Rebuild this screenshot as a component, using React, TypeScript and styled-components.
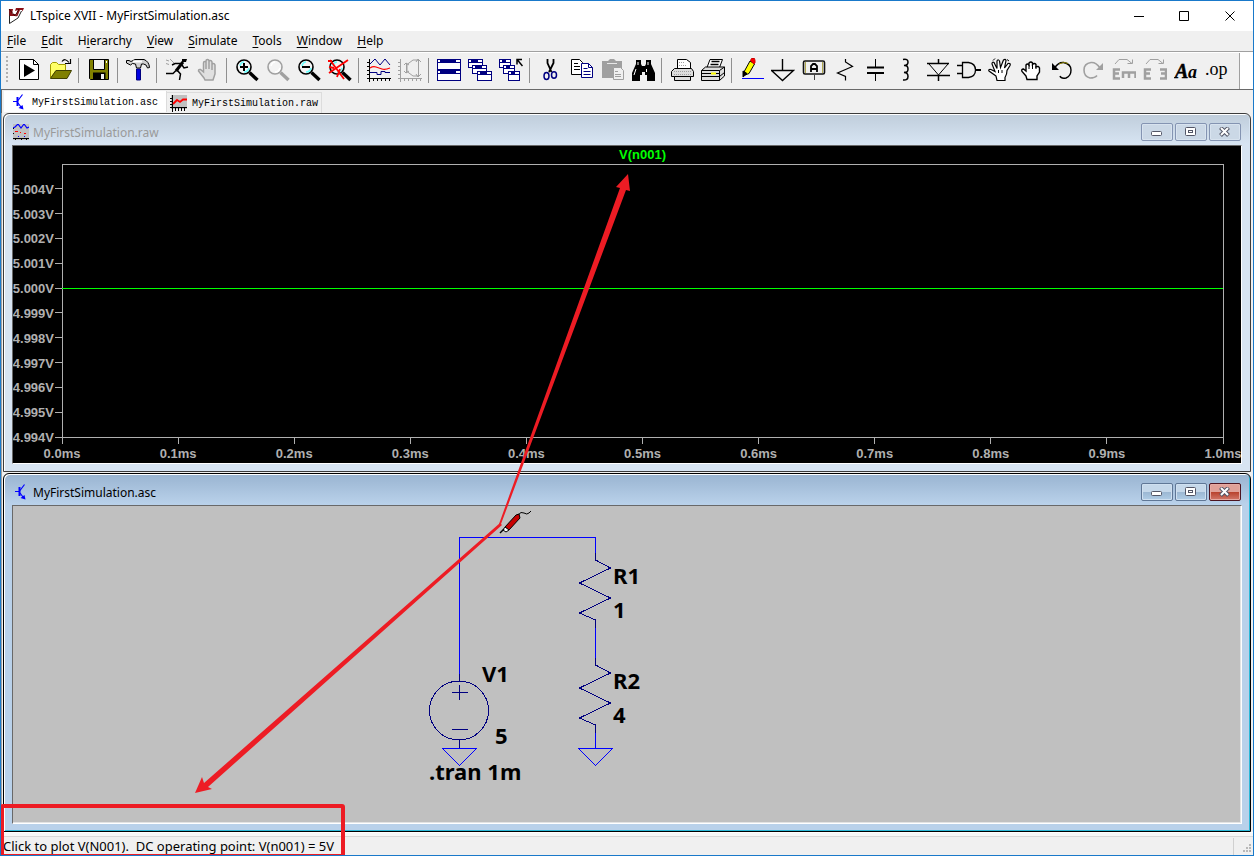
import React from "react";
import styled, { createGlobalStyle, css } from "styled-components";

const UI_FONT = '"Noto Sans", "Open Sans", sans-serif';
const PLOT_FONT = '"Liberation Sans", Arial, sans-serif';
const MONO_FONT = '"Liberation Mono", "DejaVu Sans Mono", monospace';

const GlobalStyle = createGlobalStyle`
  *, *::before, *::after { box-sizing: border-box; }
  body { margin: 0; font-family: ${UI_FONT}; font-size: 12px; color: #000; }
  button { font: inherit; color: inherit; margin: 0; padding: 0; border: 0; background: none; }
`;

const Frame = styled.div`
  position: relative;
  display: flex;
  flex-direction: column;
  min-height: 100vh;
  border: 1px solid #1979ca;
  background: #f0f0f0;
  overflow: hidden;
`;

/* ---------- title bar and menus ---------- */

const TitleBar = styled.header`
  display: flex;
  align-items: center;
  height: 30px;
  padding-left: 7px;
  background: #fff;
`;

const AppTitle = styled.h1`
  flex: 1;
  margin: 0;
  padding-left: 6px;
  font-size: 12px;
  font-weight: 400;
  line-height: 16px;
`;

const CaptionButton = styled.button`
  display: grid;
  place-items: center;
  width: 46px;
  height: 28px;
`;

const MenuBar = styled.nav`
  display: flex;
  gap: 15px;
  height: 20px;
  padding-left: 6px;
`;

const MenuItem = styled.button`
  line-height: 18px;
  u { text-underline-offset: 2px; }
`;

/* ---------- toolbar ---------- */

const ToolRow = styled.div`
  display: flex;
  height: 39px;
  border-top: 1px solid #a0a0a0;
  border-bottom: 1px solid #696969;
  background: #fff;
`;

const ToolBar = styled.div`
  display: flex;
  align-items: center;
  height: 36px;
  margin-top: 1px;
  padding: 0 7px 2px 5px;
  border-right: 1px solid #a0a0a0;
  background: #f0f0f0;
`;

const Grip = styled.div`
  width: 2px;
  height: 28px;
  margin-right: 5px;
  background: repeating-linear-gradient(#b0b0b0 0 2px, transparent 2px 4px);
`;

const ToolButton = styled.button`
  display: grid;
  place-items: center;
  width: 31px;
  height: 28px;
`;

const Divider = styled.div`
  width: 8px;
  height: 25px;
  background: linear-gradient(90deg, transparent 3px, #909090 3px 4px, transparent 4px);
`;

/* ---------- document tabs ---------- */

const TabStrip = styled.div`
  display: flex;
  align-items: flex-start;
  height: 23px;
  padding: 1px 2px 0;
  border-left: 1px solid #696969;
`;

const Tab = styled.button<{ $active?: boolean }>`
  display: flex;
  align-items: center;
  gap: 5px;
  height: 21px;
  font-family: ${MONO_FONT};
  font-size: 10px;
  line-height: 12px;
  border-right: 1px solid #dcdcdc;
  span { padding-top: 2px; }
  ${(p) =>
    p.$active
      ? css`
          padding: 0 8px 0 7px;
          background: #fff;
        `
      : css`
          margin-top: 1px;
          padding: 0 3px;
          border-top: 1px solid #dcdcdc;
        `}
`;

/* ---------- document windows ---------- */

const Workspace = styled.main`
  flex: 1;
  display: flex;
  flex-direction: column;
  padding: 0 2px 0 1px;
  border-left: 1px solid #a0a0a0;
  background: #efefef;
`;

const DocWindow = styled.section<{ $active?: boolean }>`
  flex: 1 0 359px;
  display: flex;
  flex-direction: column;
  padding: 0 8px 7px;
  border: 1px solid ${(p) => (p.$active ? "#000" : "#3c3c3c")};
  border-radius: 6px 6px 0 0;
  background: ${(p) =>
    p.$active
      ? "linear-gradient(#99b4d1, #b9d1ea 30px, #b9d1ea)"
      : "linear-gradient(#bfcddb, #d7e4f2 30px, #d7e4f2)"};
  box-shadow: inset 1px 1px #fff, inset -1px -1px ${(p) => (p.$active ? "#2cb9d8" : "#d7e4f2")};
  & + & { margin-top: 1px; }
`;

const DocTitle = styled.div<{ $active?: boolean }>`
  display: flex;
  align-items: center;
  gap: 2px;
  height: 31px;
  padding: 5px 1px 0;
  color: ${(p) => (p.$active ? "#000" : "#9a9a9a")};
  h2 {
    flex: 1;
    margin: 0;
    padding: 2px 0 0 2px;
    font-size: 12px;
    font-weight: 400;
    line-height: 16px;
  }
`;

const DocButton = styled.button<{ $tone: "idle" | "blue" | "red" }>`
  display: grid;
  place-items: center;
  width: 32px;
  height: 18px;
  border: 1px solid #8494b2;
  border-radius: 2px;
  ${(p) =>
    p.$tone === "idle" &&
    css`
      background: #cbd8e6;
      box-shadow: inset 0 0 0 1px #d8e3ef;
    `}
  ${(p) =>
    p.$tone === "blue" &&
    css`
      border-color: #5f7796;
      background: linear-gradient(#c5d8ea 50%, #9bb7d2 50%, #b0cde6);
      box-shadow: inset 0 0 0 1px #cfe0f0;
    `}
  ${(p) =>
    p.$tone === "red" &&
    css`
      border-color: #4c1420;
      background: linear-gradient(#e0a198 50%, #b8412c 50%, #d2786a);
      box-shadow: inset 0 0 0 1px #e6aaa2;
    `}
`;

const Client = styled.div<{ $dark?: boolean }>`
  flex: 1;
  display: flex;
  min-height: 0;
  border: 1px solid;
  border-color: #696969 #fff #fff #696969;
  background: ${(p) => (p.$dark ? "#000" : "#c0c0c0")};
  box-shadow: ${(p) => (p.$dark ? "none" : "inset -1px -1px #e3e3e3")};
`;

const PlotSvg = styled.svg`
  flex: 1;
  min-width: 0;
  height: auto;
  font: bold 13px ${PLOT_FONT};
  line { shape-rendering: crispEdges; }
`;

const PlotArea = styled.svg`
  width: calc(100% - 67px);
  height: calc(100% - 44px);
  overflow: visible;
`;

const Schematic = styled.svg`
  display: block;
  flex: none;
  font: bold 22px ${UI_FONT};
`;

/* ---------- status bar ---------- */

const StatusBar = styled.footer`
  display: flex;
  align-items: center;
  height: 23px;
  padding: 3px 1px 0 2px;
  border-top: 1px solid #fff;
  box-shadow: inset 0 3px #f7f7f7, inset 0 4px #d9d9d9;
`;

const StatusText = styled.p`
  flex: 1;
  margin: 0;
  font-size: 13px;
  line-height: 16px;
  white-space: pre;
`;

const SizeGrip = styled.div`
  display: flex;
  align-items: flex-end;
  justify-content: flex-end;
  align-self: flex-end;
  width: 19px;
  height: 17px;
  padding-bottom: 1px;
  border-left: 1px solid #d0d0d0;
`;

const Annotation = styled.svg`
  position: absolute;
  top: 0;
  left: 0;
  overflow: visible;
  pointer-events: none;
`;

/* ---------- icons ---------- */

const Glyph = ({ children }: { children: React.ReactNode }) => (
  <svg width="24" height="24" viewBox="0 0 24 24" fill="none" stroke="#000" aria-hidden="true">
    {children}
  </svg>
);

const G = "#a0a0a0";
const NAVY = "#000080";

const Lens = ({ color = "#000", shine = "#6ff", children }: { color?: string; shine?: string; children?: React.ReactNode }) => (
  <Glyph>
    <circle cx="9" cy="9" r="7" fill="#f4f4f4" stroke={color} strokeWidth="1.6" />
    <path d="M5 8q1-4 4-4M9 14q4 0 5-4" stroke={shine} strokeWidth="1.6" />
    {children}
    <path d="M14.5 14.5l8 7.5" stroke={color} strokeWidth="3.4" />
  </Glyph>
);

const MiniWindow = ({ x, y, w = 13, h = 9 }: { x: number; y: number; w?: number; h?: number }) => (
  <g shapeRendering="crispEdges" stroke="none">
    <rect x={x} y={y} width={w} height={h} fill={NAVY} />
    <rect x={x + 1} y={y + 4} width={w - 2} height={h - 5} fill="#fff" />
    <rect x={x + 1} y={y + 1} width="2" height="2" fill="#fff" />
    <rect x={x + w - 5} y={y + 1} width="4" height="2" fill="#fff" />
  </g>
);

const Transistor = () => (
  <svg width="16" height="16" viewBox="0 0 16 16" fill="none" stroke="#00f" aria-hidden="true">
    <path d="M2 7.5h4M7 6.500l4.500-6" strokeWidth="1.2" />
    <path d="M6.5 3v9" strokeWidth="2" />
    <path d="M7 9l3 4" strokeWidth="1.2" />
    <path d="M12.500 15.500l-5-1.500 4-3z" fill="#00f" stroke="none" />
  </svg>
);

const TraceTabIcon = () => (
  <svg width="17" height="17" viewBox="0 0 17 17" fill="none" stroke="#000" aria-hidden="true">
    <path fill="#c0c0c0" stroke="none" d="M1 0h16v14H1z" />
    <path d="M2.5 0v17M0 12.5h17M0 3.5h2M0 6.5h2M0 9.5h2M5.5 13v3M8.5 13v3M11.5 13v3M14.5 13v3" />
    <path d="M3 9l4-4 3 2 3-2.500h4" stroke="#f00" strokeWidth="1.8" />
  </svg>
);

const TraceDocIcon = () => (
  <svg width="16" height="16" viewBox="0 0 16 16" fill="none" stroke="#000" aria-hidden="true">
    <path fill="#c0c0c0" stroke="none" d="M0 0h16v16H0z" />
    <path d="M0 4l2-1 3-3 3 4 3-4 3 4 2-1" stroke="#00f" strokeWidth="1.2" />
    <path d="M2 7.5h3M7 8.5h1M11 9.5h2" stroke="#f00" />
    <path d="M5 12.5h1M11 12.5h1" stroke="#00f" />
    <path d="M0 14.5h16M2.5 14v2M8.5 14v2M13.5 14v2" />
    <path d="M0 4.5h1M0 9.5h1" />
  </svg>
);

const AppLogo = () => (
  <svg width="16" height="16" viewBox="0 0 16 16" fill="none" aria-hidden="true">
    <path d="M1.5 1.5v14L10 10l3.500-7" stroke="#222" />
    <path d="M1 1h4L4 6h4l-1 2H1.500zM8 0h8l-1.500 3.500L14 2l-2 0-2.500 6-2 .5L10 2 7 3z" fill="#8a1018" />
    <path d="M1 1l6 7 4-7" stroke="#400" />
  </svg>
);

type Tool = { label: string; icon: React.ReactNode };

const toolGroups: Tool[][] = [
  [
    {
      label: "New Schematic",
      icon: (
        <Glyph>
          <path d="M2.5 1.5h14l5 5v15h-19z" fill="#fff" />
          <path d="M16.5 1.5v5h5" />
          <path d="M7 6v13l11-6.500z" fill="#000" stroke="none" />
        </Glyph>
      ),
    },
    {
      label: "Open",
      icon: (
        <Glyph>
          <path d="M2.5 20V6.500l2-2h4l2 2h7v6H8z" fill="#ffff66" stroke="#a09a00" />
          <path d="M8 12.5h15.500L19 20.500H2.500z" fill="#808000" stroke="#404000" />
          <path d="M14 3.5q3-4 7 1M17 5.5h5.500V1" strokeWidth="1.2" />
        </Glyph>
      ),
    },
  ],
  [
    {
      label: "Save",
      icon: (
        <Glyph>
          <path d="M2.5 1.5h19v20h-18l-1-1z" fill="#808000" />
          <path d="M6.5 2v9.500h11V2" fill="#f0f0f0" />
          <path d="M6 14.5h12.500V22H6z" fill="#000" stroke="none" />
          <path d="M14 16h3v5h-3z" fill="#f0f0f0" stroke="none" />
          <path d="M19 3h1v2h-1z" fill="#fff" stroke="none" />
        </Glyph>
      ),
    },
  ],
  [
    {
      label: "Control Panel",
      icon: (
        <Glyph>
          <path d="M10.5 11h4v11h-4z" fill="#0000e0" stroke={NAVY} />
          <path d="M.5 2.5H3l2 1 4-2h9q5 2 5.500 8l-2 .5q-1-4-4-4h-2l-1 4h-4l-1-4-3-.5-2 1.500-4-2z" fill="#d0d0d0" />
          <path d="M7 3.5h9" stroke="#fff" strokeWidth="2" />
        </Glyph>
      ),
    },
  ],
  [
    {
      label: "Run",
      icon: (
        <Glyph>
          <path d="M17 1h5l-1 3h-4z" fill="#000" stroke="none" />
          <path d="M18 4l-7 9" strokeWidth="3" />
          <path d="M16 5.5H10L7 7M17 7l2 3 4-1M12 12l3.500 4-1 6M11 12.500L8 15.500H1" strokeWidth="1.500" />
          <path d="M1 2l3 1M5 1l4 4M1 5.5l3 1" stroke={G} />
        </Glyph>
      ),
    },
    {
      label: "Halt",
      icon: (
        <Glyph>
          <path d="M8 20l-5.500-7q0-2 2-1.500L7.500 14V5q0-1.500 1.300-1.500T10 5v6V3q0-1.500 1.500-1.500T13 3v8-7q0-1.500 1.300-1.500T16 4v8-5q0-1.500 1.300-1.500T19 7v9l-2 6H9z" fill="#e0e0e0" stroke={G} strokeWidth="1.5" />
        </Glyph>
      ),
    },
  ],
  [
    { label: "Zoom Area", icon: <Lens><path d="M5 9h8M9 5v8" strokeWidth="2" /></Lens> },
    { label: "Zoom Back", icon: <Lens color={G} shine="#fff" /> },
    { label: "Zoom Out", icon: <Lens><path d="M5 9h8" strokeWidth="2" /></Lens> },
    {
      label: "Zoom Full Extents",
      icon: (
        <Lens>
          <path d="M2 2l14 19M20 2L1 15M0 3h4M1 9l5 1M9 19l3-8" stroke="#f00" strokeWidth="1.8" />
        </Lens>
      ),
    },
  ],
  [
    {
      label: "Autorange",
      icon: (
        <Glyph>
          <path d="M2.5 1v23M0 20.5h24M0 4.5h3M0 8.5h3M0 12.5h3M0 16.5h3M6.5 20v3M10.5 20v3M14.5 20v3M18.5 20v3M22.5 20v3" />
          <path d="M3 6l5-5 5 6 5-6 5 6" stroke={NAVY} />
          <path d="M3 10q3-2 6-1t6 2 8-1" stroke="#f00" strokeWidth="1.3" />
          <path d="M3 14.5h7v2h4v-3h4v1h5" stroke={NAVY} />
        </Glyph>
      ),
    },
    {
      label: "FFT",
      icon: (
        <Glyph>
          <path d="M2.5 1v23M0 20.5h24M0 4.5h3M0 8.5h3M0 12.5h3M0 16.5h3M6.5 20v3M10.5 20v3M14.5 20v3M18.5 20v3M22.5 20v3M20.5 1v18M8.5 5v10" stroke={G} />
          <path d="M20 2h-5L9 6.500v7L15 18h5M18 4l2-3 3 3M18 16l2 3 3-3M6 7l2-2 3 2M6 13l2 2 3-2" stroke={G} />
        </Glyph>
      ),
    },
  ],
  [
    {
      label: "Tile Windows",
      icon: <Glyph><MiniWindow x={0} y={1} w={24} h={11} /><MiniWindow x={0} y={12} w={24} h={11} /></Glyph>,
    },
    {
      label: "Cascade Windows",
      icon: <Glyph><MiniWindow x={0} y={1} w={15} /><MiniWindow x={4} y={7} w={15} /><MiniWindow x={9} y={13} w={15} h={10} /></Glyph>,
    },
    {
      label: "Close All Windows",
      icon: (
        <Glyph>
          <MiniWindow x={0} y={1} w={12} /><MiniWindow x={4} y={7} w={12} /><MiniWindow x={9} y={13} w={12} h={10} />
          <path d="M18 6.5V1.500h5M18.500 2l5 6" strokeWidth="1.5" />
        </Glyph>
      ),
    },
  ],
  [
    {
      label: "Cut",
      icon: (
        <Glyph>
          <path d="M9.500 1v4l4 9M15.500 1v4L11 14" strokeWidth="1.8" />
          <ellipse cx="8.5" cy="18" rx="2.5" ry="3.5" stroke={NAVY} strokeWidth="1.5" />
          <ellipse cx="16" cy="17" rx="2.5" ry="3.2" stroke={NAVY} strokeWidth="1.5" />
        </Glyph>
      ),
    },
    {
      label: "Copy",
      icon: (
        <Glyph>
          <path d="M2.5 1.5h8l3 3v12h-11z" fill="#fff" />
          <path d="M5 5.500h4M5 8.500h6M5 11.500h6" />
          <path d="M12.500 5.500h7l4 4v10h-11z" fill="#fff" stroke={NAVY} />
          <path d="M19.500 5.500v4h4M14.500 10.500h4M14.500 13.500h7M14.500 16.500h7" stroke={NAVY} />
        </Glyph>
      ),
    },
    {
      label: "Paste",
      icon: (
        <Glyph>
          <path d="M2 3h6l2-2h4l2 2h6v17H2z" fill={G} stroke="none" />
          <path d="M7 5.500h10" stroke="#e8e8e8" />
          <path d="M13.500 9.500h7l3 3v9h-10z" fill="#f0f0f0" stroke={G} />
          <path d="M15 13.500h3M15 16.500h6M15 18.500h6" stroke={G} />
        </Glyph>
      ),
    },
    {
      label: "Find",
      icon: (
        <Glyph>
          <path d="M5 2h5v4l1 2h3l1-2V2h5v4l4 9v8h-8v-6h-2v-3h-3v3H9v6H1v-8l4-9z" fill="#000" stroke="none" />
          <path d="M7 4v3M17 4v3M5 11l-2 6M15.500 11v3" stroke="#fff" />
        </Glyph>
      ),
    },
  ],
  [
    {
      label: "Print Preview",
      icon: (
        <Glyph>
          <path d="M7.5 10.500V1.500h9l4 3v6" fill="#fff" />
          <path d="M4.500 10.500h17l2 3v5h-3v4H4.500v-4h-3v-5z" fill="#ddd" />
          <path d="M9 4.500h6M9 7.500h8M4 13.500h17M4 16.500h17" stroke={G} strokeDasharray="1 1" />
          <path d="M4.500 18.500h16" />
        </Glyph>
      ),
    },
    {
      label: "Print",
      icon: (
        <Glyph>
          <path d="M6 9.500l3-8h12.500l-3 8" fill="#fff" />
          <path d="M10.500 3.500h8M9.500 6.500h8" strokeWidth="1.3" />
          <path d="M.5 12.500l4-3.500h19v9l-5 4.500H.5z" fill="#ddd" />
          <path d="M.5 12.500h18v10M18.500 12.500l5-3.500M.5 18.500h18l5-4M1 15.500h17" />
          <path d="M10 15.500h5" stroke="#ff0" strokeWidth="2" />
        </Glyph>
      ),
    },
  ],
  [
    {
      label: "Wire",
      icon: (
        <Glyph>
          <path d="M4.500 13L10 3l4.500 3-5.500 9.500-4 1.500z" fill="#ff0" />
          <path d="M10.500 2.500l1-2h3l.5 2v2l-1 1.500z" fill="#f00" stroke="#c00" />
          <path d="M3 13l4 2.500L3 19z" fill="#000" />
          <path d="M2 20.500h22" stroke="#00f" />
        </Glyph>
      ),
    },
    { label: "Ground", icon: <Glyph><path d="M11.500 1v11M.5 12.500h22L11.500 22.500z" strokeWidth="1.4" /></Glyph> },
    {
      label: "Label Net",
      icon: (
        <Glyph>
          <rect x="1.500" y="3" width="21" height="13" rx="1.5" stroke="#111" strokeWidth="1.6" />
          <path d="M3.500 4v11M20.500 4v11" stroke="#b0a850" />
          <path d="M9 14V8l2-2h2l2 2v6M9 11h6" strokeWidth="1.8" />
          <path d="M12.500 16v6" stroke="#444" />
        </Glyph>
      ),
    },
    { label: "Resistor", icon: <Glyph><path d="M12.500 1v3l7 4.500L4.500 15l8 3.500v4" strokeWidth="1.2" /></Glyph> },
    { label: "Capacitor", icon: <Glyph><path d="M11.500 1v8M11.500 15v8" /><path d="M3 9.500h17M3 15h17" strokeWidth="2" /></Glyph> },
    { label: "Inductor", icon: <Glyph><path d="M8 1.500q5-1 5 2.500t-4 3.500q4-.5 4 3.500t-4 3.500q4 0 4 4t-5 3.500" strokeWidth="1.5" /></Glyph> },
    {
      label: "Diode",
      icon: <Glyph><path d="M12.500 1v5M12.500 17v6" strokeWidth="1.5" /><path d="M1 5.500h22M1 17.500h23" strokeWidth="1.5" /><path d="M3 6l9.500 11L22 6" /></Glyph>,
    },
    {
      label: "Component",
      icon: <Glyph><path d="M5.500 4.500h6q7 1 7 7.500t-7 7.500h-6zM0 7.500h5M0 15.500h5" strokeWidth="1.3" /><path d="M18 12h6" strokeWidth="2" /></Glyph>,
    },
    {
      label: "Move",
      icon: (
        <Glyph>
          <path d="M8 18L1 13q-1-2 2-1.500l4 2L4 6q0-2.500 2-1.500l3 6L9 3q1-2.500 2.500 0l1 6.500L15.500 2q2-1.500 2.500.5L16.500 10l3.500-4.500q3-.5 2 2l-3 5q0 4-2 7v3H9z" fill="#fff" strokeWidth="1.2" />
          <path d="M5 2.500l2-2M19 1.500l2 1.500M10.500 12v3M14 12v3" />
        </Glyph>
      ),
    },
    {
      label: "Drag",
      icon: (
        <Glyph>
          <path d="M7 18l-4-4.500q-1-2.500 1.500-2.500L7 13V7q1.500-2 3 0V5q2-2 3.500 0v1.500q2-2 3.500 0V9q2.500-1.500 3.500 1v4L18 18v3.500H8z" fill="#fff" strokeWidth="1.4" />
          <path d="M10 7v4M13.500 6.500V11M17 8v3" />
        </Glyph>
      ),
    },
    {
      label: "Undo",
      icon: (
        <Glyph>
          <path d="M4.500 10q4-6 9-5.500Q21 6 21 12t-5 8q-5 1-6-2" strokeWidth="1.4" />
          <path d="M9 6q5-3 9-.5" stroke="#8a8000" />
          <path d="M2 5v7h7z" fill="#000" stroke="none" />
        </Glyph>
      ),
    },
    {
      label: "Redo",
      icon: (
        <Glyph>
          <path d="M19 10q-4-6-9-5.500-7 1-7 7.500t6 8q5 0 7-2.500" stroke={G} strokeWidth="1.6" />
          <path d="M22 5v7h-7z" fill={G} stroke="none" />
        </Glyph>
      ),
    },
    {
      label: "Rotate",
      icon: (
        <Glyph>
          <path d="M8 11.500H2v9h6M2 15.500h5M11 20v-5.500h12.500V20M17 14v6" stroke={G} strokeWidth="2.500" />
          <path d="M3 6l4-4.500h8l5 4M20.500 1.500V5.500h-5" stroke={G} />
        </Glyph>
      ),
    },
    {
      label: "Mirror",
      icon: (
        <Glyph>
          <path d="M8 11.500H2v9h6M2 15.500h5M17 11.500h6v9h-6M23 15.500h-5" stroke={G} strokeWidth="2.500" />
          <path d="M3 6l4-4.500h8l5 4M20.500 1.500V5.500h-5" stroke={G} />
        </Glyph>
      ),
    },
    {
      label: "Text",
      icon: (
        <Glyph>
          <text x="1" y="20" fill="#000" strokeWidth="0.5" fontFamily='"Liberation Serif", serif' fontStyle="italic" fontWeight="700" fontSize="20">A</text>
          <text x="14" y="20" fill="#000" stroke="none" fontFamily='"Liberation Serif", serif' fontStyle="italic" fontWeight="700" fontSize="18">a</text>
        </Glyph>
      ),
    },
    {
      label: "SPICE Directive",
      icon: (
        <Glyph>
          <text x="0" y="17" fill="#000" stroke="none" fontFamily='"Liberation Serif", serif' fontSize="18">.op</text>
        </Glyph>
      ),
    },
  ],
];

const menus: [string, string, string][] = [
  ["", "F", "ile"],
  ["", "E", "dit"],
  ["H", "i", "erarchy"],
  ["", "V", "iew"],
  ["", "S", "imulate"],
  ["", "T", "ools"],
  ["", "W", "indow"],
  ["", "H", "elp"],
];

const DocButtons = ({ active }: { active?: boolean }) => (
  <>
    <DocButton $tone={active ? "blue" : "idle"} aria-label="Minimize">
      <svg width="12" height="10" viewBox="0 0 12 10"><rect x=".5" y="4.5" width="10" height="4" rx="1" fill="#fff" stroke="#535666" /></svg>
    </DocButton>
    <DocButton $tone={active ? "blue" : "idle"} aria-label="Restore">
      <svg width="12" height="10" viewBox="0 0 12 10" fill="#fff" stroke="#535666"><rect x=".5" y=".5" width="10" height="8" rx="1" /><rect x="3.5" y="3.5" width="4" height="2" /></svg>
    </DocButton>
    <DocButton $tone={active ? "red" : "idle"} aria-label="Close">
      <svg width="12" height="10" viewBox="0 0 12 10" fill="none"><path d="M1.500 .5l8 8M9.500 .5l-8 8" stroke="#535666" strokeWidth="4" /><path d="M2 1l7 7M9 1L2 8" stroke="#fff" strokeWidth="2" /></svg>
    </DocButton>
  </>
);

/* ---------- waveform plot ---------- */

const voltTicks = ["5.004V", "5.003V", "5.002V", "5.001V", "5.000V", "4.999V", "4.998V", "4.997V", "4.996V", "4.995V", "4.994V"];
const timeTicks = Array.from({ length: 11 }, (_, i) => `${(i / 10).toFixed(1)}ms`);
const AXIS = "#b0b0b0";

const Waveform = () => (
  <PlotSvg role="img" aria-label="Plot of V(n001)">
    <PlotArea x="49" y="18">
      <text x="50%" y="-5" textAnchor="middle" fill="#0f0">V(n001)</text>
      <g stroke={AXIS}>
        <line x1="0" y1="0" x2="100%" y2="0" />
        <line x1="0" y1="100%" x2="100%" y2="100%" />
        <line x1="0" y1="0" x2="0" y2="100%" />
        <line x1="100%" y1="0" x2="100%" y2="100%" />
      </g>
      {voltTicks.map((label, i) => {
        const y = `${((i + 1) / 11) * 100}%`;
        return (
          <g key={label}>
            <line x1="-7" x2="0" y1={y} y2={y} stroke={AXIS} />
            <text x="-8" y={y} dy="5" textAnchor="end" fill={AXIS}>{label}</text>
          </g>
        );
      })}
      {timeTicks.map((label, i) => (
        <svg key={label} x={`${i * 10}%`} y="100%" overflow="visible">
          <line x1="0" x2="0" y1="0" y2="7" stroke={AXIS} />
          <text x="0" y="21" textAnchor="middle" fill={AXIS}>{label}</text>
        </svg>
      ))}
      <line x1="0" x2="100%" y1={`${500 / 11}%`} y2={`${500 / 11}%`} stroke="#0f0" />
    </PlotArea>
  </PlotSvg>
);

/* ---------- schematic ---------- */

const Resistor = ({ y }: { y: number }) => (
  <path d={`M582.5 ${y}v7l15 8l-31 15l31 15l-31 15l16 7v8`} stroke={NAVY} />
);

const Circuit = () => (
  <Schematic width="700" height="317" viewBox="0 0 700 317" fill="none" role="img" aria-label="Circuit schematic">
    <g shapeRendering="crispEdges">
      <path d="M446.5 168V31.500H582.500V47M582.500 122v31M582.500 227v15" stroke="#00f" />
      <path d="M429.5 242.500h34l-17 17zM565.500 242.500h34l-17 17z" stroke="#00f" />
      <Resistor y={47} />
      <Resistor y={152} />
      <circle cx="446" cy="204.5" r="29.5" stroke={NAVY} />
      <path d="M446.5 168v7M446.5 234v8M439 186.500h16M446.500 179v15M439 223.500h16" stroke={NAVY} />
    </g>
    <g fill="#000">
      <text x="600" y="78">R1</text>
      <text x="600" y="112">1</text>
      <text x="600" y="183">R2</text>
      <text x="600" y="217">4</text>
      <text x="469" y="176">V1</text>
      <text x="482" y="238">5</text>
      <text x="416" y="274">.tran 1m</text>
    </g>
    <g transform="translate(487 4)" stroke="#000">
      <path d="M18 5q3-4 6-2t5 0l2-2" />
      <path d="M5 17L16 5l3-1 1 4L9 20z" fill="#c80000" />
      <path d="M5 17l4 3-3 2-3-2z" fill="#fff" />
      <path d="M0 23l4-4" strokeWidth="1.500" />
    </g>
  </Schematic>
);

export default function App() {
  return (
    <Frame>
      <GlobalStyle />
      <TitleBar>
        <AppLogo />
        <AppTitle>LTspice XVII - MyFirstSimulation.asc</AppTitle>
        <CaptionButton aria-label="Minimize">
          <svg width="11" height="11" stroke="#000"><path d="M1 5.500h10" /></svg>
        </CaptionButton>
        <CaptionButton aria-label="Maximize">
          <svg width="11" height="11" stroke="#000" fill="none"><path d="M.5 .5h9v9h-9z" /></svg>
        </CaptionButton>
        <CaptionButton aria-label="Close">
          <svg width="11" height="11" stroke="#000"><path d="M.5 .5l9 9M9.500 .5l-9 9" /></svg>
        </CaptionButton>
      </TitleBar>
      <MenuBar aria-label="Main menu">
        {menus.map(([before, key, after]) => (
          <MenuItem key={before + key + after}>
            {before}
            <u>{key}</u>
            {after}
          </MenuItem>
        ))}
      </MenuBar>
      <ToolRow>
        <ToolBar role="toolbar" aria-label="Tools">
          <Grip />
          {toolGroups.map((group, i) => (
            <React.Fragment key={group[0].label}>
              {i > 0 && <Divider />}
              {group.map((tool) => (
                <ToolButton key={tool.label} aria-label={tool.label}>
                  {tool.icon}
                </ToolButton>
              ))}
            </React.Fragment>
          ))}
        </ToolBar>
      </ToolRow>
      <TabStrip role="tablist">
        <Tab $active role="tab" aria-selected="true">
          <Transistor />
          <span>MyFirstSimulation.asc</span>
        </Tab>
        <Tab role="tab" aria-selected="false">
          <TraceTabIcon />
          <span>MyFirstSimulation.raw</span>
        </Tab>
      </TabStrip>
      <Workspace>
        <DocWindow>
          <DocTitle>
            <TraceDocIcon />
            <h2>MyFirstSimulation.raw</h2>
            <DocButtons />
          </DocTitle>
          <Client $dark>
            <Waveform />
          </Client>
        </DocWindow>
        <DocWindow $active>
          <DocTitle $active>
            <Transistor />
            <h2>MyFirstSimulation.asc</h2>
            <DocButtons active />
          </DocTitle>
          <Client>
            <Circuit />
          </Client>
        </DocWindow>
      </Workspace>
      <StatusBar>
        <StatusText>{"Click to plot V(N001).  DC operating point: V(n001) = 5V"}</StatusText>
        <SizeGrip>
          <svg width="10" height="10" fill="#b8b8b8" aria-hidden="true">
            <path d="M7 0h2v2H7zM4 3h2v2H4zM7 3h2v2H7zM1 6h2v2H1zM4 6h2v2H4zM7 6h2v2H7z" />
          </svg>
        </SizeGrip>
      </StatusBar>
      <Annotation width="700" height="854" viewBox="0 0 700 854" fill="#ed1c24" aria-hidden="true">
        <path d="M498 523L619 187L615 186L627 173L629 190L625 189L500 523z" />
        <path d="M501 524L207 786L211 788L194 792L201 776L203 782L499 522z" />
        <rect x="1" y="805" width="341" height="50" rx="1" fill="none" stroke="#ed1c24" strokeWidth="4" />
      </Annotation>
    </Frame>
  );
}
